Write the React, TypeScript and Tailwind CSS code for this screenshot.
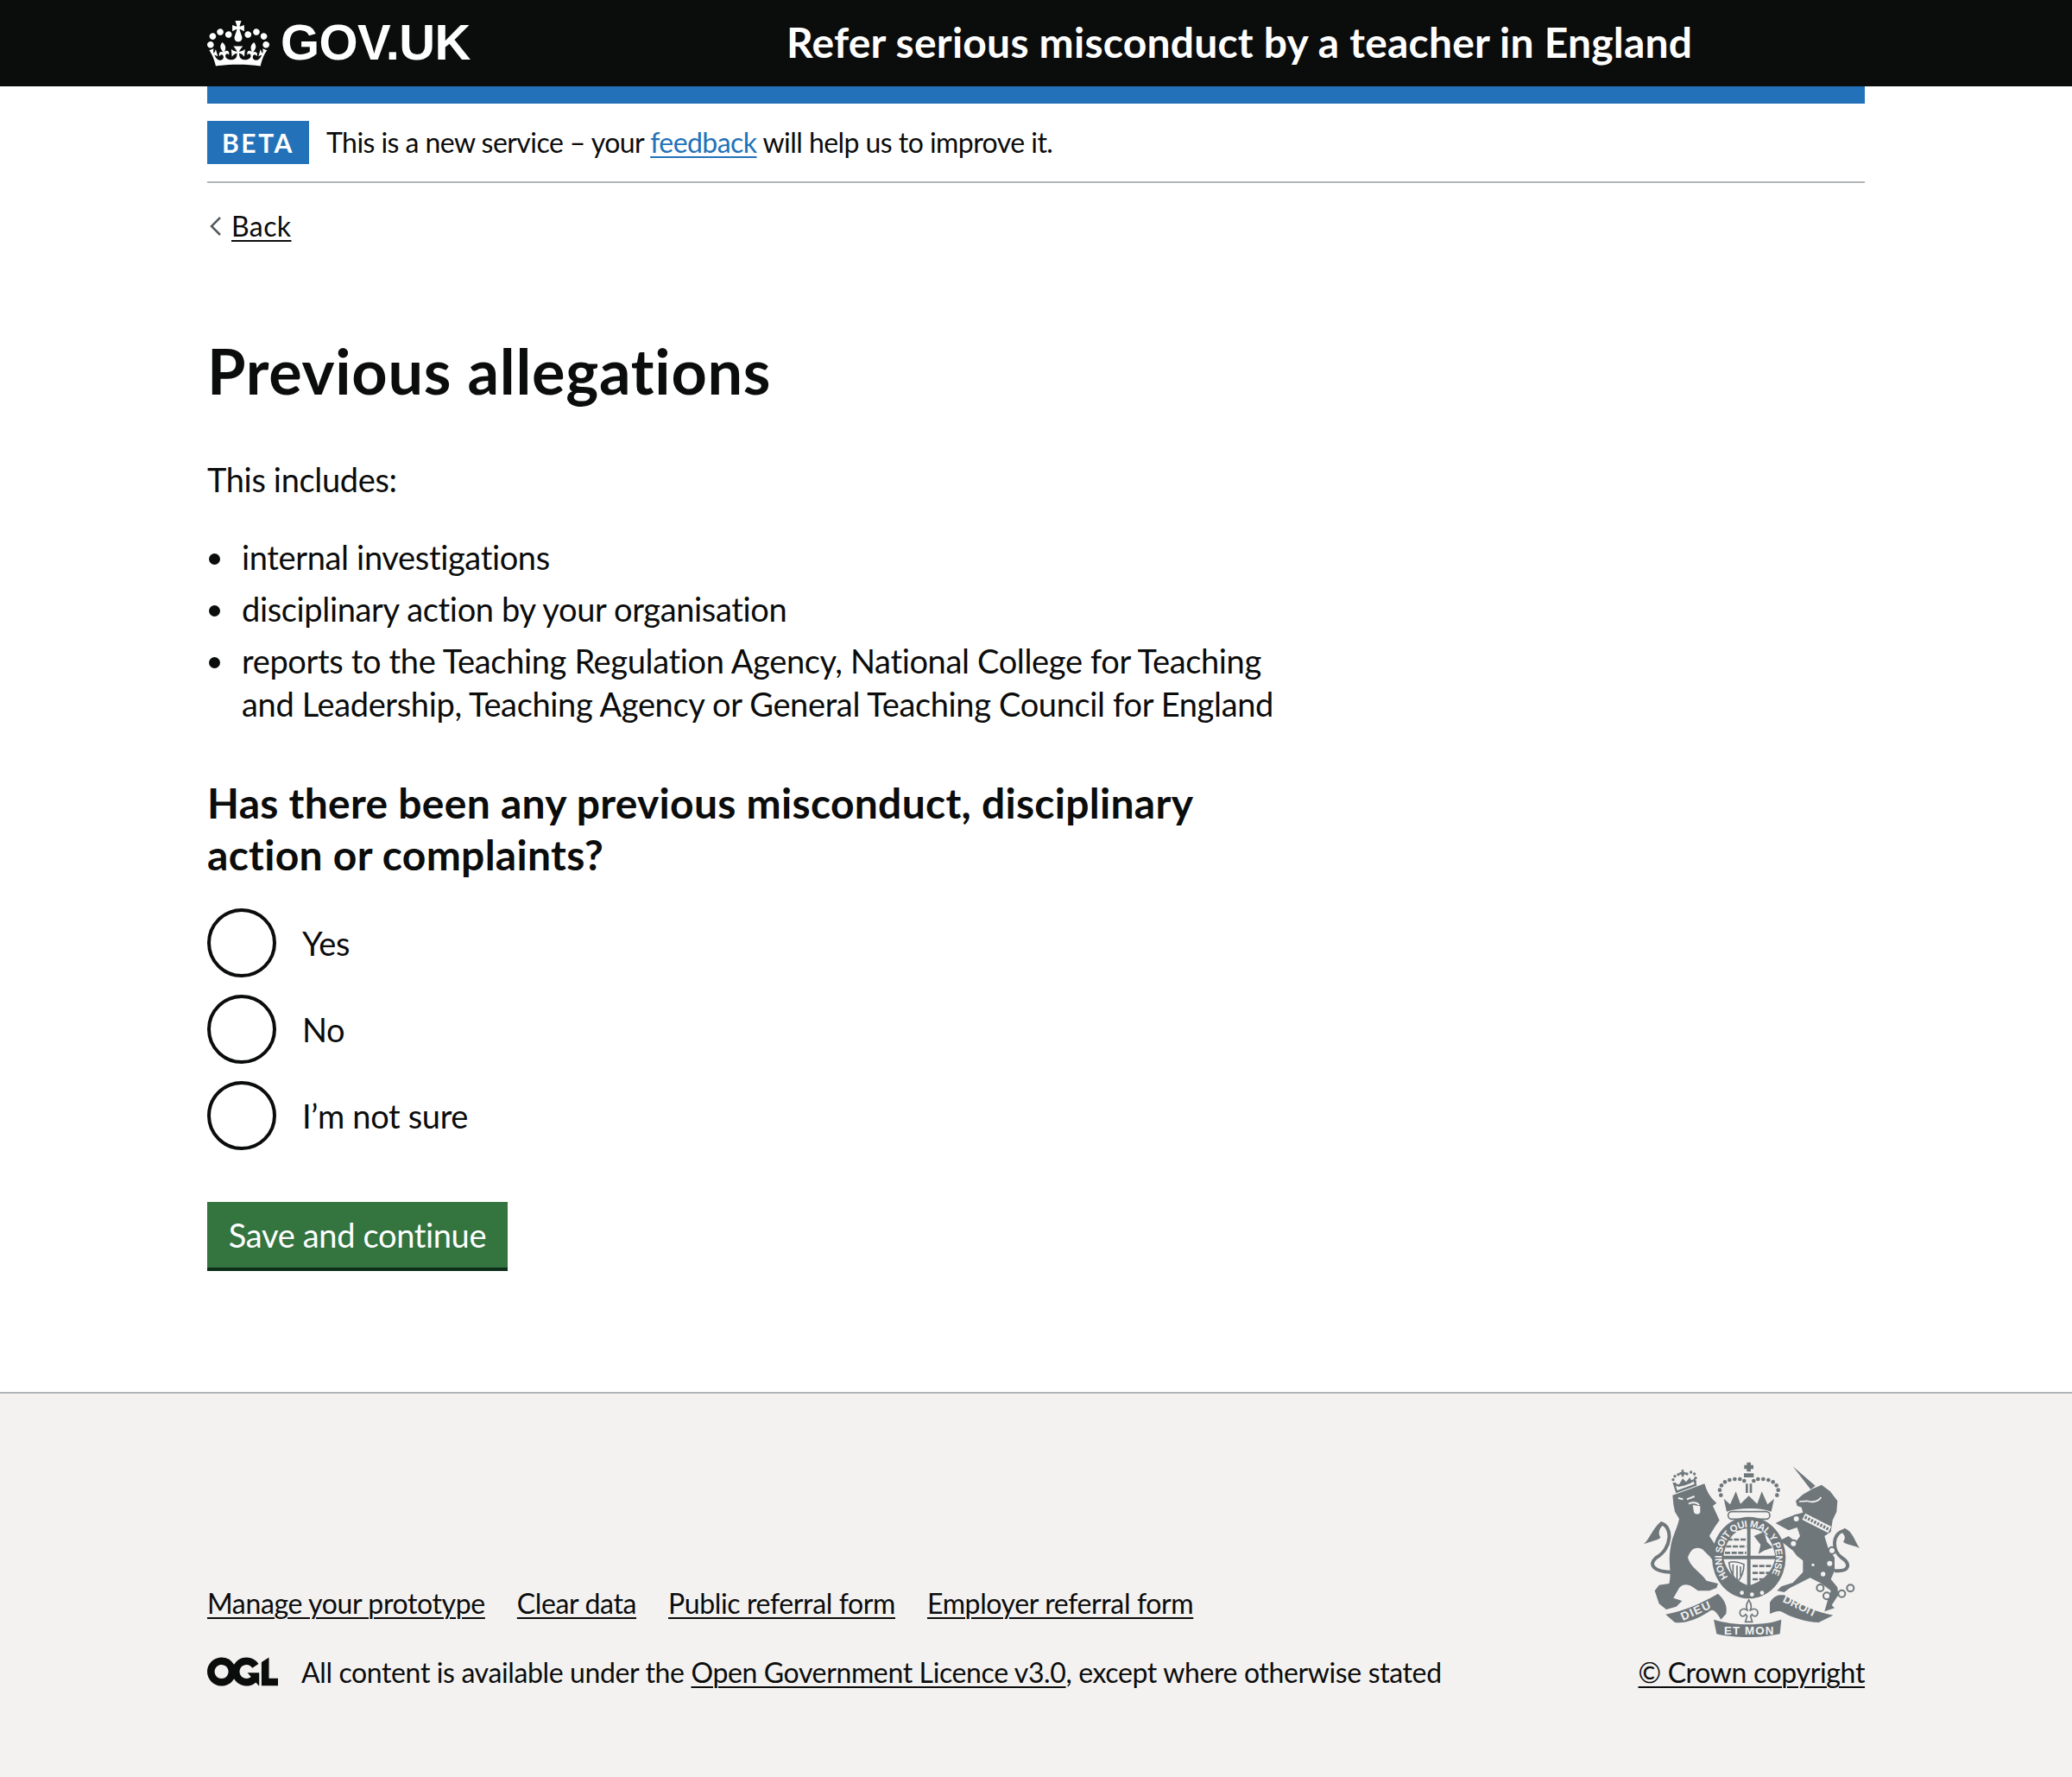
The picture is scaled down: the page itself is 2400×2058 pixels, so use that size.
import React from "react";

const BODY = "font-['Lato',sans-serif] tracking-[-0.35px]";

function Crown() {
  return (
    <svg viewBox="0 0 132 97" width="72" height="53" className="block shrink-0" aria-hidden="true">
      <path
        fill="currentColor"
        fillRule="evenodd"
        d="M25 30.2c3.5 1.5 7.7-.2 9.1-3.7 1.5-3.6-.2-7.8-3.9-9.2-3.6-1.4-7.6.3-9.1 3.9-1.4 3.5.3 7.5 3.9 9zM9 39.5c3.6 1.5 7.8-.2 9.2-3.7 1.5-3.6-.2-7.8-3.9-9.1-3.6-1.5-7.6.2-9.1 3.8-1.4 3.5.3 7.5 3.8 9zM4.4 57.2c3.5 1.5 7.7-.2 9.1-3.8 1.5-3.6-.2-7.7-3.9-9.1-3.5-1.5-7.6.3-9.1 3.8-1.4 3.5.3 7.6 3.9 9.1zm38.3-21.4c3.5 1.5 7.7-.2 9.1-3.8 1.5-3.6-.2-7.7-3.9-9.1-3.6-1.5-7.6.3-9.1 3.8-1.3 3.6.4 7.7 3.9 9.1zm64.4-5.6c-3.6 1.5-7.8-.2-9.1-3.7-1.5-3.6.2-7.8 3.8-9.2 3.6-1.4 7.7.3 9.2 3.9 1.3 3.5-.4 7.5-3.9 9zm15.9 9.3c-3.6 1.5-7.7-.2-9.1-3.7-1.5-3.6.2-7.8 3.7-9.1 3.6-1.5 7.7.2 9.2 3.8 1.5 3.5-.3 7.5-3.8 9zm4.7 17.7c-3.6 1.5-7.8-.2-9.2-3.8-1.5-3.6.2-7.7 3.9-9.1 3.6-1.5 7.7.3 9.2 3.8 1.3 3.5-.4 7.6-3.9 9.1zM89.3 35.8c-3.6 1.5-7.8-.2-9.2-3.8-1.4-3.6.2-7.7 3.9-9.1 3.6-1.5 7.7.3 9.2 3.8 1.4 3.6-.3 7.7-3.9 9.1zM69.7 17.7l8.9 4.7V9.3l-8.9 2.8c-.2-.3-.5-.6-.9-.9L72.4 0H59.6l3.5 11.2c-.3.3-.6.5-.9.9l-8.8-2.8v13.1l8.8-4.7c.3.3.6.7.9.9l-5 15.4v.1c-.2.8-.4 1.6-.4 2.4 0 4.1 3.1 7.5 7 8.1h.2c.3 0 .7.1 1 .1.4 0 .7 0 1-.1h.2c4-.6 7.1-4.1 7.1-8.1 0-.8-.1-1.7-.4-2.4V34l-5.1-15.4c.4-.2.7-.6 1-.9zM66 92.8c16.9 0 32.8 1.1 47.1 3.2 4-16.9 8.9-26.7 14-33.5l-9.6-3.4c1 4.9 1.1 7.2 0 10.2-1.5-1.4-3-4.3-4.2-8.7L108.6 76c2.8-2 5-3.2 7.5-3.3-4.4 9.4-10 11.9-13.6 11.2-4.3-.8-6.3-4.6-5.6-7.9 1-4.7 5.7-5.9 8-.5 4.3-8.7-3-11.4-7.6-8.8 7.1-7.2 7.9-13.5 2.1-21.1-8 6.1-8.1 12.3-4.5 20.8-4.7-5.4-12.1-2.5-9.5 6.2 3.4-5.2 7.9-2 7.2 3.1-.6 4.3-6.4 7.8-13.5 7.2-10.3-.9-10.9-8-11.2-13.8 2.5-.5 7.1 1.8 11 7.3L80.2 60c-4.1 4.4-8 5.3-12.3 5.4 1.4-4.4 8-11.6 8-11.6H55.5s6.4 7.2 7.9 11.6c-4.2-.1-8-1-12.3-5.4l1.4 16.4c3.9-5.5 8.5-7.7 10.9-7.3-.3 5.8-.9 12.8-11.1 13.8-7.2.6-12.9-2.9-13.5-7.2-.7-5 3.8-8.3 7.1-3.1 2.7-8.7-4.6-11.6-9.4-6.2 3.7-8.5 3.6-14.7-4.6-20.8-5.8 7.6-5 13.9 2.2 21.1-4.7-2.6-11.9.1-7.7 8.8 2.3-5.5 7.1-4.2 8.1.5.7 3.3-1.3 7.1-5.7 7.9-3.5.7-9-1.8-13.5-11.2 2.5.1 4.7 1.3 7.5 3.3l-4.7-15.4c-1.2 4.4-2.7 7.2-4.3 8.7-1.1-3-.9-5.3 0-10.2l-9.5 3.4c5 6.9 9.9 16.7 14 33.5 14.8-2.1 30.8-3.2 47.7-3.2z"
      />
    </svg>
  );
}

function OglLogo() {
  return (
    <svg viewBox="0 0 483.2 195.7" width="82" height="34" className="block shrink-0 text-[#0b0c0c] -mt-[3px]" aria-hidden="true">
      <path
        fill="currentColor"
        d="M421.5 142.8V.1l-50.7 32.3v161.1h112.4v-50.7zm-122.3-9.6A47.12 47.12 0 0 1 221 97.8c0-26 21.1-47.1 47.1-47.1 16.7 0 31.4 8.7 39.7 21.8l42.7-27.2A97.63 97.63 0 0 0 268.1 0c-36.5 0-68.3 20.1-85.1 49.7A98 98 0 0 0 97.8 0C43.9 0 0 43.9 0 97.8s43.9 97.8 97.8 97.8c36.5 0 68.3-20.1 85.1-49.7a97.76 97.76 0 0 0 149.6 25.4l19.4 22.2h3v-87.8h-80l24.3 27.5zM97.8 145c-26 0-47.1-21.1-47.1-47.1s21.1-47.1 47.1-47.1 47.2 21 47.2 47S123.8 145 97.8 145"
      />
    </svg>
  );
}

const INK = "#6f777b";
const PAPER = "#f3f2f1";

function RoyalArms() {
  const chain = [
    [602, 240],
    [592, 326],
    [726, 350],
    [685, 480],
    [708, 508],
    [760, 500],
    [790, 481],
  ];
  const crownDots = [
    [340, 158], [336, 140], [342, 124], [354, 112], [370, 105], [388, 102], [406, 102], [421, 108],
    [454, 108], [469, 102], [487, 102], [505, 105], [521, 112], [533, 124], [539, 140], [535, 158],
  ];
  const lionCrownDots = [
    [180, 118], [174, 104], [180, 92], [192, 86], [222, 84], [236, 78], [248, 84], [252, 98], [250, 110],
  ];
  return (
    <svg viewBox="60 30 780 630" width="260" height="210" className="block" aria-hidden="true">
      {/* lion */}
      <path
        fill={INK}
        d="M172 158L283 118C290 140 300 165 325 185L312 195L335 245C320 265 305 290 300 300L330 345L345 385L325 400L300 370L275 345C250 335 235 345 225 375C235 410 270 425 290 455L330 465L325 480L300 490L260 490C235 470 215 460 195 480L175 515L205 525L185 545L150 555L125 535L110 490L125 470L160 465C170 420 155 395 165 340C170 300 190 270 195 240L180 215L175 190Z"
      />
      <path fill="none" stroke={INK} strokeWidth="12" d="M165 425C110 425 85 400 115 375C170 345 175 265 130 255" />
      <path fill={INK} d="M132 250C105 270 95 305 72 328C95 318 120 315 130 305C120 290 125 270 145 258Z" />
      <path fill="none" stroke={PAPER} strokeWidth="6" d="M222 172L248 162M228 188C240 180 258 184 264 192M192 168L208 172" />
      <path fill={PAPER} d="M242 192L268 196L268 218C262 226 250 226 246 216Z" />
      {/* lion crown */}
      <path fill={PAPER} stroke={INK} strokeWidth="7" d="M178 120C195 130 230 118 248 104L252 122L186 146Z" />
      <path fill={INK} d="M195 120L207 100L219 112L232 96L240 112L190 130Z" />
      {lionCrownDots.map(([cx, cy]) => (
        <circle key={`${cx}-${cy}`} cx={cx} cy={cy} r="5" fill={INK} />
      ))}
      <path stroke={INK} strokeWidth="8" d="M207 70V94M196 82H218" />
      {/* unicorn */}
      <path fill={INK} d="M590 58L668 125L652 138Z" />
      <path
        fill={INK}
        d="M600 178L625 155L660 135L690 122L720 145L745 178L742 215L728 245L722 285L700 300L712 340L735 375L735 420L722 450L745 478L748 505L725 540L735 550L700 562L712 520L722 490L690 465L650 445L610 465L580 480L560 495L535 490L550 475L590 462L625 425L625 385L605 370L590 350L545 315L575 300L600 320L615 300L605 270L575 280L530 255L560 240L600 225L625 218L620 200L605 195Z"
      />
      <path fill="none" stroke={INK} strokeWidth="12" d="M735 420C790 425 790 395 760 375C725 350 725 290 770 280" />
      <path fill={INK} d="M770 272C800 285 805 320 822 342C800 330 775 330 765 320C775 305 770 295 758 285Z" />
      <path fill="none" stroke={PAPER} strokeWidth="24" d="M628 232L718 278" />
      <path fill="none" stroke={INK} strokeWidth="11" strokeDasharray="7 5" d="M632 234L714 276" />
      <path fill="none" stroke={PAPER} strokeWidth="5" d="M612 180L640 178M640 178C655 185 680 180 688 165" />
      <circle cx="718" cy="395" r="9" fill={PAPER} />
      <circle cx="695" cy="432" r="8" fill={PAPER} />
      <circle cx="660" cy="400" r="5" fill={PAPER} />
      {chain.map(([cx, cy]) => (
        <circle key={`${cx}-${cy}`} cx={cx} cy={cy} r="12" fill={PAPER} stroke={INK} strokeWidth="6" />
      ))}
      {/* main crown */}
      <path stroke={INK} strokeWidth="14" d="M437 44V76M421 60H453" />
      <path fill={INK} d="M420 82H454V96H420ZM426 118H434V150H426ZM440 118H448V150H440Z" />
      {crownDots.map(([cx, cy]) => (
        <circle key={`${cx}-${cy}`} cx={cx} cy={cy} r="7" fill={INK} />
      ))}
      <path
        fill={INK}
        d="M350 170L372 190L392 145L408 188L437 160L466 188L482 145L502 190L525 170L515 215C470 200 405 200 360 215Z"
      />
      <rect x="365" y="215" width="145" height="26" rx="13" fill={PAPER} stroke={INK} strokeWidth="5" />
      {/* garter and shield */}
      <ellipse cx="437" cy="375" rx="128" ry="142" fill={INK} />
      <path fill={PAPER} d="M431 274C390 276 358 310 349 368H431Z" />
      <path fill={PAPER} d="M443 274C490 276 520 310 528 368H443Z" />
      <path fill={PAPER} d="M349 380H431V470C395 455 362 428 349 380Z" />
      <path fill={PAPER} d="M443 380H528C517 428 485 455 443 470Z" />
      <path fill="none" stroke={INK} strokeWidth="8" strokeDasharray="18 5" d="M362 312H428M358 336H428M354 358H428M450 404H520M450 428H510M450 450H492" />
      <path fill={INK} d="M455 300L490 285L500 320L520 340L490 350L470 362L478 330Z" />
      <path fill="none" stroke={INK} strokeWidth="5" d="M368 392C385 385 405 392 420 398C420 430 410 445 398 458C385 445 372 425 368 392ZM382 398V438M396 402V452M408 405V440" />
      <path id="garter-text" fill="none" d="M365 443A94 106 0 1 1 509 443" />
      <text fill={PAPER} fontFamily="'Liberation Sans',sans-serif" fontWeight="700" fontSize="34">
        <textPath href="#garter-text" textLength="445">HONI SOIT QUI MAL Y PENSE</textPath>
      </text>
      <circle cx="413" cy="497" r="7" fill={PAPER} />
      <circle cx="448" cy="503" r="7" fill={PAPER} />
      <circle cx="483" cy="497" r="7" fill={PAPER} />
      {/* scroll */}
      <path fill={INK} d="M148 572C210 560 270 535 330 500C345 515 365 535 358 570L340 590C320 555 310 550 295 565C255 590 215 605 180 600Z" />
      <path fill={INK} d="M315 590C385 612 490 612 550 590L545 640C480 655 385 655 325 640Z" />
      <path fill={INK} d="M510 530C530 500 545 505 560 505C610 535 670 565 730 575L680 600C640 600 590 585 555 565C540 555 525 565 510 570Z" />
      <g fill={PAPER} fontFamily="'Liberation Sans',sans-serif" fontSize="40" fontWeight="700">
        <text x="208" y="594" transform="rotate(-24 208 594)" textLength="108">DIEU</text>
        <text x="351" y="643" textLength="172">ET MON</text>
        <text x="553" y="527" transform="rotate(26 553 527)" textLength="125">DROIT</text>
      </g>
      <path
        fill={PAPER}
        stroke={INK}
        strokeWidth="5"
        d="M437 522C425 540 428 552 434 560C425 548 405 552 406 568C408 580 420 582 426 572L431 578L425 598H449L443 578L448 572C454 582 466 580 468 568C469 552 449 548 440 560C446 552 449 540 437 522Z"
      />
    </svg>
  );
}

function RadioOption({ label }: { label: string }) {
  return (
    <label className="flex items-center gap-[30px] mb-[20px] last:mb-0">
      <input
        type="radio"
        name="previous-misconduct"
        className="appearance-none w-[80px] h-[80px] rounded-full border-[4px] border-[#0b0c0c] bg-white shrink-0"
      />
      <span className="text-[38px] leading-[50px]">{label}</span>
    </label>
  );
}

const BULLET = "relative before:absolute before:left-[-38px] before:top-[21px] before:w-[13px] before:h-[13px] before:rounded-full before:bg-[#0b0c0c]";

export default function App() {
  const linkClass = "underline decoration-2 underline-offset-[4px]";
  return (
    <div className={`${BODY} bg-white text-[#0b0c0c] min-h-[2058px] flex flex-col`}>
      <header className="bg-[#0b0c0c] h-[100px] text-white">
        <div className="w-[1920px] mx-auto h-full flex items-center">
          <div className="w-[671px] shrink-0 flex items-center gap-[13px]">
            <Crown />
            <span className="font-['Liberation_Sans',sans-serif] font-bold text-[58px] leading-none tracking-[-0.6px] pb-[2px]">GOV.UK</span>
          </div>
          <span className="font-bold text-[48px] leading-[58px] tracking-[0.22px] pb-[2px]">Refer serious misconduct by a teacher in England</span>
        </div>
      </header>

      <div className="w-[1920px] mx-auto">
        <div className="h-[20px] bg-[#2372b9]" />
        <div className="py-[20px] border-b-2 border-[#b1b4b6] flex items-center gap-[20px]">
          <strong className="h-[50px] w-[118px] bg-[#2372b9] text-white text-[30px] leading-[50px] font-bold tracking-[2.6px] text-center">BETA</strong>
          <p className="text-[32px] leading-[50px] tracking-[-0.55px]">
            This is a new service – your <a href="#" className={`${linkClass} text-[#2372b9]`}>feedback</a> will help us to improve it.
          </p>
        </div>

        <a href="#" className="mt-[30px] flex items-center gap-[12px] text-[32px] leading-[40px] tracking-[0.4px] w-max">
          <svg width="13" height="22" viewBox="0 0 13 22" className="ml-[3px]" aria-hidden="true">
            <path d="M12 1L2 11l10 10" fill="none" stroke="#505a5f" strokeWidth="2.5" />
          </svg>
          <span className={linkClass}>Back</span>
        </a>

        <main className="pt-[97px] w-[1280px]">
          <h1 className="font-bold text-[72px] leading-[100px] tracking-[0.75px] mb-[51px]">Previous allegations</h1>
          <p className="text-[38px] leading-[50px] mb-[40px]">This includes:</p>
          <ul className="pl-[40px] text-[38px] leading-[50px] mb-[60px]">
            <li className={`${BULLET} mb-[10px]`}>internal investigations</li>
            <li className={`${BULLET} mb-[10px]`}>disciplinary action by your organisation</li>
            <li className={BULLET}>reports to the Teaching Regulation Agency, National College for Teaching and Leadership, Teaching Agency or General Teaching Council for England</li>
          </ul>
          <h2 className="font-bold text-[48px] leading-[60px] tracking-[0.28px] max-w-[1200px] mb-[32px]">Has there been any previous misconduct, disciplinary action or complaints?</h2>
          <div>
            <RadioOption label="Yes" />
            <RadioOption label="No" />
            <RadioOption label="I’m not sure" />
          </div>
          <button className="mt-[60px] w-[348px] h-[80px] bg-[#33743f] border-b-[4px] border-[#0d2e18] text-white text-[38px] leading-[50px]">
            Save and continue
          </button>
        </main>
      </div>

      <footer className="mt-[140px] flex-1 bg-[#f3f2f1] border-t-2 border-[#b1b4b6] pt-[75px] pb-[101px]">
        <div className="w-[1920px] mx-auto flex items-end justify-between">
          <div className="text-[32px] leading-[40px] tracking-[-0.37px]">
            <ul className="flex gap-[37px] mb-[40px]">
              <li><a href="#" className={linkClass}>Manage your prototype</a></li>
              <li><a href="#" className={linkClass}>Clear data</a></li>
              <li><a href="#" className={linkClass}>Public referral form</a></li>
              <li><a href="#" className={linkClass}>Employer referral form</a></li>
            </ul>
            <div className="flex items-center gap-[27px]">
              <OglLogo />
              <span>
                All content is available under the <a href="#" className={linkClass}>Open Government Licence v3.0</a>, except where otherwise stated
              </span>
            </div>
          </div>
          <div className="flex flex-col items-end text-[32px] leading-[40px] tracking-[-0.35px]">
            <RoyalArms />
            <a href="#" className={`${linkClass} mt-[18px]`}>© Crown copyright</a>
          </div>
        </div>
      </footer>
    </div>
  );
}
